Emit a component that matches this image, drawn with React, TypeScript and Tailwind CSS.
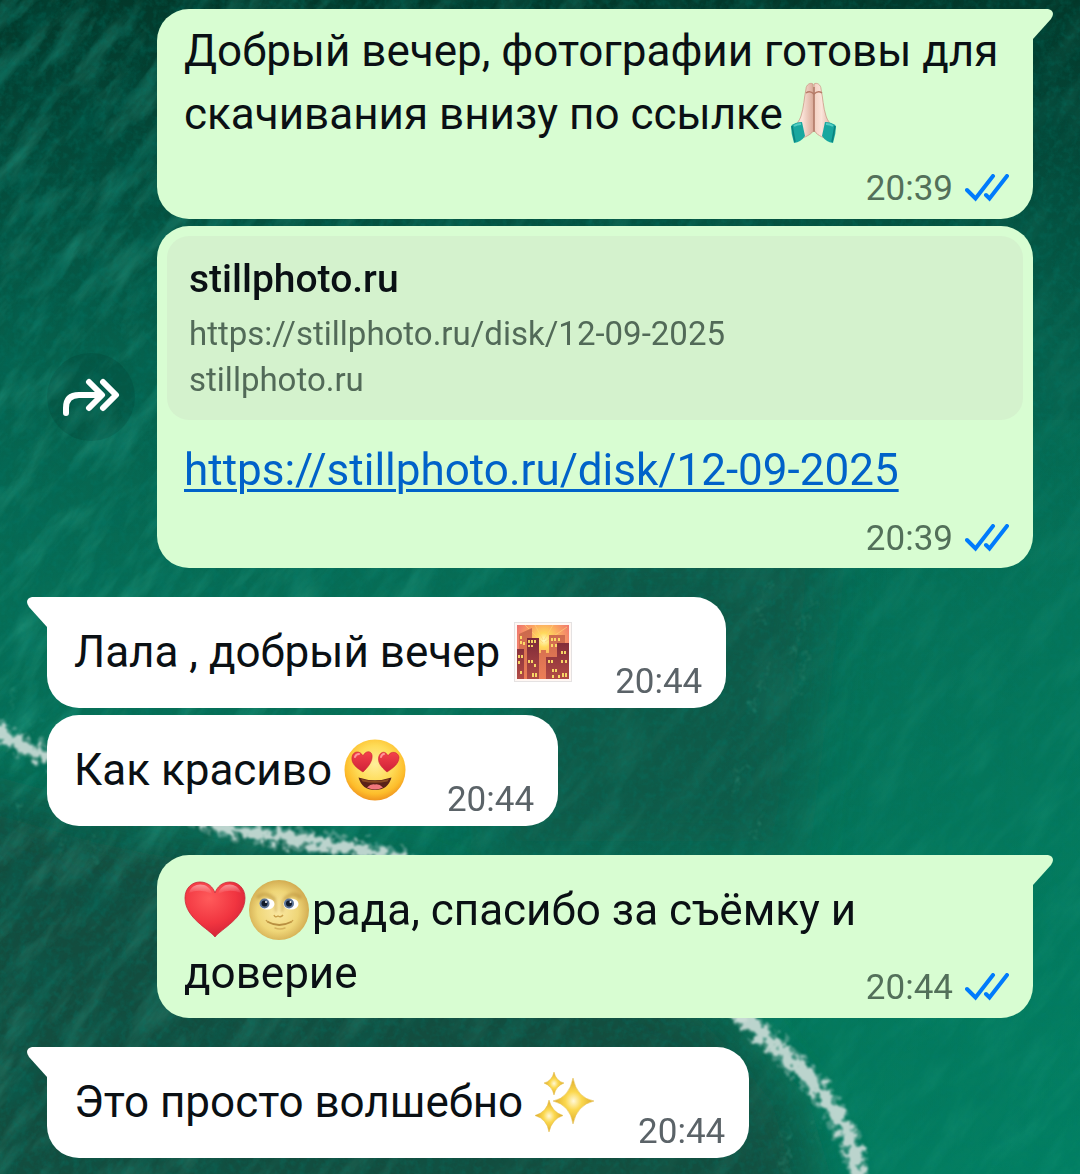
import type { ReactNode } from "react";

const emojiClass = "inline-block h-16 w-16 -my-1 align-[-13px]";

function Wallpaper() {
  return (
    <svg
      className="absolute inset-0 h-full w-full"
      viewBox="0 0 1080 1174"
      preserveAspectRatio="xMidYMid slice"
      aria-hidden="true"
    >
      <defs>
        <linearGradient id="sea" x1="0" y1="0" x2="0" y2="1">
          <stop offset="0" stopColor="#03382a" />
          <stop offset="0.1" stopColor="#044536" />
          <stop offset="0.3" stopColor="#06604c" />
          <stop offset="0.52" stopColor="#076e56" />
          <stop offset="1" stopColor="#077359" />
        </linearGradient>
        <linearGradient id="right" x1="0" y1="0" x2="1" y2="1">
          <stop offset="0.3" stopColor="#00855f" stopOpacity="0" />
          <stop offset="1" stopColor="#00896a" stopOpacity="0.6" />
        </linearGradient>
        <linearGradient id="fade" x1="0" y1="0" x2="1" y2="0.3">
          <stop offset="0.1" stopColor="#fff" />
          <stop offset="0.75" stopColor="#555" />
        </linearGradient>
        <mask id="calm">
          <rect width="1080" height="1174" fill="url(#fade)" />
        </mask>
        <filter id="waves" x="0" y="0" width="1" height="1">
          <feTurbulence type="fractalNoise" baseFrequency="0.014 0.05" numOctaves="5" seed="7" />
          <feColorMatrix values="0 0 0 0 0.06  0 0 0 0 0.6  0 0 0 0 0.45  1.8 0 0 0 -0.8" />
        </filter>
        <filter id="shade" x="0" y="0" width="1" height="1">
          <feTurbulence type="fractalNoise" baseFrequency="0.02 0.05" numOctaves="4" seed="21" />
          <feColorMatrix values="0 0 0 0 0  0 0 0 0 0.15  0 0 0 0 0.11  1.8 0 0 0 -0.78" />
        </filter>
        <filter id="grain" x="0" y="0" width="1" height="1">
          <feTurbulence type="fractalNoise" baseFrequency="0.15" numOctaves="3" seed="3" />
          <feColorMatrix values="0 0 0 0 0  0 0 0 0 0.2  0 0 0 0 0.15  1.6 0 0 0 -0.68" />
        </filter>
        <filter id="foam" x="-0.1" y="-0.1" width="1.2" height="1.2">
          <feTurbulence type="fractalNoise" baseFrequency="0.13" numOctaves="4" seed="5" result="n" />
          <feDisplacementMap in="SourceGraphic" in2="n" scale="24" xChannelSelector="R" yChannelSelector="G" />
          <feGaussianBlur stdDeviation="0.8" />
        </filter>
        <filter id="soft" x="-0.2" y="-0.2" width="1.4" height="1.4">
          <feGaussianBlur stdDeviation="28" />
        </filter>
      </defs>
      <rect width="1080" height="1174" fill="url(#sea)" />
      <rect x="540" y="420" width="540" height="754" fill="url(#right)" />
      <path
        d="M-60 780 L120 830 L420 880 L720 1010 L790 1100 L830 1240 L-60 1240Z"
        fill="#17463a"
        opacity="0.85"
        filter="url(#soft)"
      />
      <path d="M560 540H830L790 860H480Z" fill="#15493d" opacity="0.55" filter="url(#soft)" />
      <g mask="url(#calm)">
        <g transform="rotate(-52 540 587)">
          <rect x="-400" y="-400" width="1900" height="2000" filter="url(#waves)" opacity="0.42" />
          <rect x="-400" y="-400" width="1900" height="2000" filter="url(#shade)" opacity="0.5" />
        </g>
      </g>
      <rect width="1080" height="1174" filter="url(#grain)" opacity="0.4" />
      <g fill="none" stroke="#c9dcd6" strokeLinecap="round" filter="url(#foam)">
        <path d="M-10 728 Q25 748 60 762 T160 804 T300 840 T450 878 T740 1014" strokeWidth="20" opacity="0.3" />
        <path d="M-10 728 Q25 748 60 762 T160 804 T300 840 T450 878 T740 1014" strokeWidth="11" opacity="0.9" />
        <path d="M734 1008 Q772 1043 797 1066 T842 1124 T856 1190" strokeWidth="22" opacity="0.3" />
        <path d="M734 1008 Q772 1043 797 1066 T842 1124 T856 1190" strokeWidth="13" opacity="0.9" />
      </g>
      <g fill="none" stroke="#5cb89d" strokeWidth="1" opacity="0.4" filter="url(#foam)">
        <path d="M16 686l-8 28M38 718l-6 16M64 832l-4 24M90 836l6 28M22 800l-4 20M768 582l-10 44M812 600l-22 60M770 660l-18 52M808 650l-12 46M744 760l-12 36M764 810l-12 30M788 1120l-3 40M816 1120l2 26M786 1150l-4 26" />
      </g>
    </svg>
  );
}

function PrayingHands() {
  return (
    <svg viewBox="0 0 64 64" className={emojiClass} role="img" aria-label="🙏🏻">
      <defs>
        <linearGradient id="skin" x1="0" x2="1">
          <stop offset="0" stopColor="#f3d0c1" />
          <stop offset="0.4" stopColor="#fbe4da" />
          <stop offset="1" stopColor="#d9a896" />
        </linearGradient>
      </defs>
      <path
        d="M30 2C27 0 23 3 23 7C21 16 21 25 18 34C16 40 13 42 11 44L17 57C25 54 31 51 31 46Z"
        fill="url(#skin)"
        stroke="#cc9a88"
        strokeWidth="0.8"
      />
      <path
        d="M31 2C34 0 38 3 38 7C40 16 40 25 43 34C45 40 48 42 50 44L44 57C36 54 31 51 31 46Z"
        fill="url(#skin)"
        stroke="#cc9a88"
        strokeWidth="0.8"
      />
      <path d="M23 11q4-3 8 1q4-4 8-1" fill="none" stroke="#b87b67" strokeWidth="1.5" />
      <path d="M31 5V50" stroke="#b27a67" strokeWidth="1.5" />
      <path d="M8 44Q12 40 19 40L22 54Q18 60 11 61Q8 52 8 44Z" fill="#18a79f" />
      <path d="M53 44Q49 40 42 40L39 54Q43 60 50 61Q53 52 53 44Z" fill="#18a79f" />
      <path d="M9 44L12 60M52 44L49 60" stroke="#0a837e" strokeWidth="1.5" />
      <path d="M11 44Q14 42 18 42M50 44Q47 42 43 42" fill="none" stroke="#55cdc3" strokeWidth="2" />
    </svg>
  );
}

function CitySunset() {
  return (
    <svg viewBox="0 0 64 64" className={emojiClass} role="img" aria-label="🌇">
      <defs>
        <radialGradient id="sunset" cx="0.52" cy="0.28" r="0.6">
          <stop offset="0" stopColor="#fffbc0" />
          <stop offset="0.22" stopColor="#ffd95c" />
          <stop offset="0.55" stopColor="#fba463" />
          <stop offset="1" stopColor="#ec6c70" />
        </radialGradient>
        <linearGradient id="tower" x1="0" y1="0" x2="0" y2="1">
          <stop offset="0" stopColor="#7b2838" />
          <stop offset="1" stopColor="#b24b45" />
        </linearGradient>
        <linearGradient id="far" x1="0" y1="0" x2="0" y2="1">
          <stop offset="0" stopColor="#c9684c" />
          <stop offset="1" stopColor="#ec7e57" />
        </linearGradient>
      </defs>
      <rect x="3.5" y="2.5" width="57" height="59" fill="#fff7f3" stroke="#e5e2e2" />
      <rect x="6" y="5" width="52" height="54" fill="url(#sunset)" />
      <path d="M32 23L14 5M32 20L24 5M33 20L42 5M34 22L56 7M28 24L8 16" stroke="#ffd078" opacity="0.7" />
      <path d="M8 14L21 8V59H8ZM27 33h3v-3h5v3h5v26H27ZM38 15h16v14h-5v30H38Z" fill="url(#far)" />
      <path d="M16 18h12v41H16ZM6 29h7v30H6ZM46 23h12v36H35V37h11Z" fill="url(#tower)" />
      <path
        d="M10 16v3M10 21v3M13 22v3M18 20v3M21 20v3M24 20v3M18 25v2M21 25v2M18 40v3M21 40v3M24 44v3M22 53v4M25 53v4M8 35v3M11 35v3M8 41v3M10 51v3M41 18v3M44 18v3M48 18v3M41 24v3M45 24v3M51 31v3M54 31v3M38 40v3M41 40v3M42 49v3M45 49v3M51 40v3M55 40v3M42 55v3M48 55v3M52 53v4M55 53v4"
        stroke="#ffe56a"
        strokeWidth="1.8"
      />
    </svg>
  );
}

function HeartEyes() {
  return (
    <svg viewBox="0 0 64 64" className={emojiClass} role="img" aria-label="😍">
      <defs>
        <radialGradient id="face" cx="0.5" cy="0.4" r="0.6">
          <stop offset="0" stopColor="#ffee9c" />
          <stop offset="0.5" stopColor="#fedc58" />
          <stop offset="0.82" stopColor="#fdbd2b" />
          <stop offset="1" stopColor="#f0951f" />
        </radialGradient>
        <linearGradient id="eye" x1="0" y1="0" x2="0" y2="1">
          <stop offset="0" stopColor="#f4424a" />
          <stop offset="1" stopColor="#cf2038" />
        </linearGradient>
      </defs>
      <circle cx="32" cy="32" r="30.5" fill="url(#face)" />
      <g fill="url(#eye)" stroke="#c91f35" strokeWidth="0.6">
        <path d="M20 34C14 30 8 26 9 19C10 13 17 12 20 18C22 13 28 12 29 17C30 24 24 30 20 34Z" />
        <path d="M44 34C38 29 34 24 36 18C38 13 43 13 45 18C48 12 55 14 56 19C56 26 50 30 44 34Z" />
      </g>
      <path d="M12 19q1-3 4-3M38 19q1-3 3-3" stroke="#ff979a" strokeWidth="2" fill="none" strokeLinecap="round" />
      <path d="M15.5 39.5Q32 45 48.5 39.5Q45 52 32 52Q19 52 15.5 39.5Z" fill="#5a2218" />
      <path d="M18 41Q32 45 46 41L44.5 43.5Q32 46 19.5 43.5Z" fill="#8c4b22" />
      <path d="M24 49.5Q28 45.5 32 46.5Q36 45.5 40 49.5Q32 53.5 24 49.5Z" fill="#f1777c" />
    </svg>
  );
}

function RedHeart() {
  return (
    <svg viewBox="0 0 64 64" className={emojiClass} role="img" aria-label="❤️">
      <defs>
        <radialGradient id="heart" cx="0.4" cy="0.3" r="0.75">
          <stop offset="0" stopColor="#ff5b5b" />
          <stop offset="0.6" stopColor="#f13540" />
          <stop offset="1" stopColor="#cf1f35" />
        </radialGradient>
        <linearGradient id="shine" x1="0" y1="0" x2="0" y2="1">
          <stop offset="0" stopColor="#fff" stopOpacity="0.45" />
          <stop offset="1" stopColor="#fff" stopOpacity="0" />
        </linearGradient>
      </defs>
      <path
        d="M31 59C25 51 1 40 1 20C1 10 8 4 16 4C24 4 29 9 31 15C33 9 38 4 46 4C54 4 61 10 61 20C61 40 37 51 31 59Z"
        fill="url(#heart)"
        stroke="#c92839"
        strokeWidth="0.8"
      />
      <path d="M5 15C8 3 26 4 28 16Q16 10 5 15ZM34 16C37 4 53 3 57 15Q45 10 34 16Z" fill="url(#shine)" />
    </svg>
  );
}

function MoonFace() {
  return (
    <svg viewBox="0 0 64 64" className={emojiClass} role="img" aria-label="🌝">
      <defs>
        <radialGradient id="moon" cx="0.48" cy="0.52" r="0.52">
          <stop offset="0" stopColor="#fbe9a4" />
          <stop offset="0.65" stopColor="#efd678" />
          <stop offset="1" stopColor="#d3ad52" />
        </radialGradient>
        <filter id="lid" x="-0.2" y="-0.2" width="1.4" height="1.4">
          <feGaussianBlur stdDeviation="1.6" />
        </filter>
      </defs>
      <circle cx="31" cy="32" r="30" fill="url(#moon)" />
      <g fill="none" stroke="#b58a36" strokeWidth="4" opacity="0.55" filter="url(#lid)">
        <path d="M9 20Q17 12 27 22M36 22Q45 12 53 20" />
        <path d="M27 22L28 34M35 22L34 34" strokeWidth="2" />
      </g>
      <ellipse cx="19" cy="26" rx="7.5" ry="5.5" fill="#fff" />
      <ellipse cx="43" cy="26" rx="7.5" ry="5.5" fill="#fff" />
      <circle cx="16.5" cy="25.5" r="5" fill="#5b7396" />
      <circle cx="41" cy="25.5" r="5" fill="#5b7396" />
      <circle cx="16.5" cy="25.5" r="3" fill="#101a2b" />
      <circle cx="41" cy="25.5" r="3" fill="#101a2b" />
      <circle cx="18" cy="24" r="1" fill="#fff" />
      <circle cx="42.5" cy="24" r="1" fill="#fff" />
      <path d="M26 37Q27 40 30 38Q33 40 35 37" fill="none" stroke="#c9a04a" strokeWidth="1.4" />
      <path d="M20 44Q31 50 43 44" fill="none" stroke="#b88f40" strokeWidth="1.8" strokeLinecap="round" />
      <path d="M18 42q1 2 3 2M45 42q-1 2-3 2" fill="none" stroke="#c9a04a" strokeWidth="1.4" />
      <path d="M27 50Q32 52 37 50" fill="none" stroke="#d6b25c" strokeWidth="1.4" strokeLinecap="round" />
    </svg>
  );
}

function Sparkles() {
  return (
    <svg viewBox="0 0 64 64" className={emojiClass} role="img" aria-label="✨">
      <defs>
        <radialGradient id="star" cx="0.5" cy="0.5" r="0.5">
          <stop offset="0" stopColor="#fff8d8" />
          <stop offset="0.4" stopColor="#fbd84f" />
          <stop offset="1" stopColor="#dca92a" />
        </radialGradient>
      </defs>
      <g fill="url(#star)" stroke="#e5bd49" strokeWidth="0.5">
        <path d="M39 8Q43 28 60 31Q43 35 39 54Q36 35 19 31Q35 28 39 8Z" />
        <path d="M20 2Q22 11 30 13Q22 16 20 25Q18 16 10 13Q18 11 20 2Z" />
        <path d="M15 30Q18 42 29 45.5Q18 49 15 62Q13 49 1 45.5Q13 42 15 30Z" />
      </g>
    </svg>
  );
}

function DoubleCheck() {
  return (
    <svg viewBox="0 0 44 30" className="h-[30px] w-11" role="img" aria-label="Прочитано">
      <g fill="none" stroke="#007bfc" strokeWidth="4" strokeLinecap="round">
        <path d="M2 16L10.5 24.5L28 2" />
        <path d="M21 21L24.5 24.5L42 2" />
      </g>
    </svg>
  );
}

function Meta({ time, read }: { time: string; read?: boolean }) {
  return (
    <span
      className={`flex shrink-0 items-center gap-3 self-end text-[35px] leading-10 ${
        read ? "text-[#53705a]" : "text-[#5b6368]"
      }`}
    >
      <time>{time}</time>
      {read && <DoubleCheck />}
    </span>
  );
}

function Tail({ side }: { side: "left" | "right" }) {
  return (
    <svg
      viewBox="0 0 20 30"
      className={`absolute top-0 h-[30px] w-5 ${
        side === "right" ? "left-full text-[#d8fdd2]" : "right-full -scale-x-100 text-white"
      }`}
      aria-hidden="true"
    >
      <path d="M-1 0H15Q20 1 20 5Q20 7 18 10L0 30H-1Z" fill="currentColor" />
    </svg>
  );
}

function Outgoing({ tail, className, children }: { tail?: boolean; className: string; children: ReactNode }) {
  return (
    <div
      className={`relative ml-[110px] flex grow rounded-[32px] bg-[#d8fdd2] ${tail ? "rounded-tr-none" : ""} ${className}`}
    >
      {tail && <Tail side="right" />}
      {children}
    </div>
  );
}

function Incoming({ tail, time, children }: { tail?: boolean; time: string; children: ReactNode }) {
  return (
    <div
      className={`relative flex gap-10 rounded-[32px] bg-white pt-6 pr-6 pb-[6px] pl-[27px] ${
        tail ? "rounded-tl-none" : ""
      }`}
    >
      {tail && <Tail side="left" />}
      <p className="pb-[18px]">{children}</p>
      <Meta time={time} />
    </div>
  );
}

export default function App() {
  return (
    <main className="relative min-h-screen overflow-hidden bg-[#066350] font-[Roboto,sans-serif] text-[44px] leading-[63px] text-[#0a1014]">
      <Wallpaper />
      <div className="relative flex flex-col gap-[29px] px-[47px] pt-[9px] pb-4">
        <section className="flex flex-col gap-[7px]">
          <div className="flex">
            <Outgoing tail className="flex-col gap-[23px] pt-[11px] pr-6 pb-[10px] pl-[27px]">
              <p>
                Добрый вечер, фотографии готовы для скачивания внизу по ссылке
                <PrayingHands />
              </p>
              <Meta time="20:39" read />
            </Outgoing>
          </div>

          <div className="flex items-center">
            <button
              type="button"
              aria-label="Переслать"
              className="-mr-[88px] flex size-[88px] shrink-0 items-center justify-center rounded-full bg-black/10"
            >
              <svg viewBox="0 0 58 42" className="h-[42px] w-[58px]" aria-hidden="true">
                <g fill="none" stroke="#fff" strokeWidth="6" strokeLinecap="round" strokeLinejoin="round">
                  <path d="M4 37V32Q4 19 17 19H38" />
                  <path d="M27 6L40 19L27 32M41 6L54 19L41 32" />
                </g>
              </svg>
            </button>
            <Outgoing className="flex-col px-[10px] pt-[10px] pb-[9px]">
              <div className="rounded-[22px] bg-[#d4f2cd] px-[22px] pt-4 pb-[17px] text-[33px] leading-[46px] text-[#526a58]">
                <h2 className="pb-1 text-[39px] leading-[55px] font-medium text-[#0a1014]">stillphoto.ru</h2>
                <p>https://stillphoto.ru/disk/12-09-2025</p>
                <p>stillphoto.ru</p>
              </div>
              <div className="flex flex-col gap-[17px] pt-[19px] pr-[14px] pl-[17px]">
                <a
                  href="https://stillphoto.ru/disk/12-09-2025"
                  className="self-start text-[#0062c9] underline decoration-3 underline-offset-4"
                >
                  https://stillphoto.ru/disk/12-09-2025
                </a>
                <Meta time="20:39" read />
              </div>
            </Outgoing>
          </div>
        </section>

        <section className="flex flex-col items-start gap-[7px]">
          <Incoming tail time="20:44">
            Лала , добрый вечер <CitySunset />
          </Incoming>
          <Incoming time="20:44">
            Как красиво <HeartEyes />
          </Incoming>
        </section>

        <section className="flex">
          <Outgoing tail className="gap-2 pt-6 pr-6 pb-[10px] pl-[27px]">
            <p className="grow pb-[3px]">
              <RedHeart />
              <MoonFace />
              рада, спасибо за съёмку и доверие
            </p>
            <Meta time="20:44" read />
          </Outgoing>
        </section>

        <section className="flex flex-col items-start">
          <Incoming tail time="20:44">
            Это просто волшебно <Sparkles />
          </Incoming>
        </section>
      </div>
    </main>
  );
}
